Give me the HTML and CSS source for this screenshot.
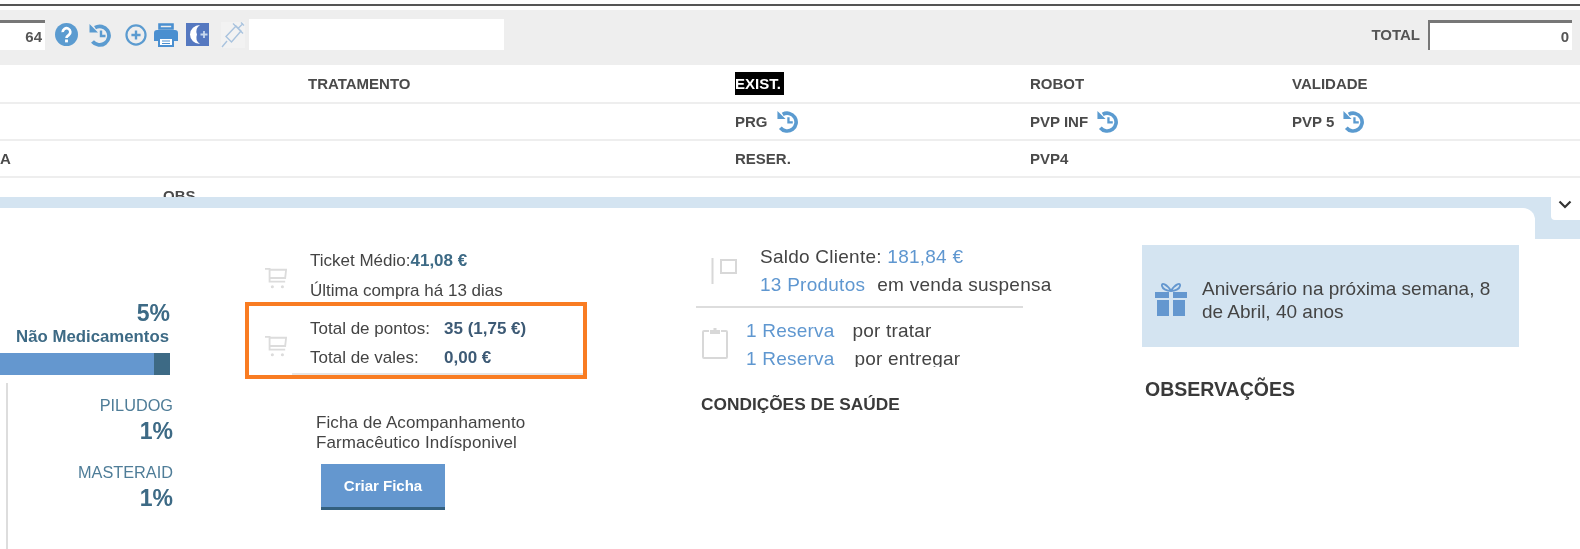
FILE: index.html
```html
<!DOCTYPE html>
<html lang="pt">
<head>
    <meta charset="UTF-8">
    <title>Ficha de Cliente</title>
    <link rel="stylesheet" href="styles.css">
</head>
<body>
    <svg class="icon-defs" width="0" height="0">
        <symbol id="i-history" viewBox="0 0 24 24">
            <path d="M7 4.600A9.300 9.300 0 1 1 4.500 18.500" fill="none" stroke="currentColor" stroke-width="3.800"/>
            <path d="M1.500 1v8.500H10z" fill="currentColor"/>
            <path d="M13 7.500v5.500h4.500" fill="none" stroke="currentColor" stroke-width="2.400"/>
        </symbol>
        <symbol id="i-cart" viewBox="0 0 24 24">
            <path d="M0 2h5v14h17M5 3h18l-1 9H5" fill="none" stroke="currentColor" stroke-width="2"/>
            <circle cx="8" cy="21.500" r="1.700" fill="currentColor"/>
            <circle cx="19" cy="21.500" r="1.700" fill="currentColor"/>
        </symbol>
    </svg>

    <div class="top-rule"></div>

    <!-- Toolbar -->
    <div class="toolbar">
        <div class="num-input qty">64</div>
        <svg class="tool tool-help" viewBox="0 0 24 24">
            <circle cx="12" cy="12" r="12" fill="#5b9bd0"/>
            <path d="M8 9.500a4 4 0 1 1 6.300 3.200c-1.400 1-2.300 1.500-2.300 3" fill="none" stroke="#fff" stroke-width="2.800"/>
            <rect x="10.500" y="17.200" width="3" height="3" fill="#fff"/>
        </svg>
        <svg class="tool tool-hist"><use href="#i-history"/></svg>
        <svg class="tool tool-plus" viewBox="0 0 24 24">
            <circle cx="12" cy="12" r="10.400" fill="none" stroke="#5b9bd0" stroke-width="2.400"/>
            <path d="M12 7v10M7 12h10" stroke="#5b9bd0" stroke-width="2.600"/>
        </svg>
        <svg class="tool tool-print" viewBox="0 0 24 24">
            <path d="M5.500 1.500h13v4h-13z" fill="none" stroke="#4a8fd0" stroke-width="2.600"/>
            <path d="M3 7h18a3 3 0 0 1 3 3v8h-4v-4H4v4H0v-8a3 3 0 0 1 3-3z" fill="#4a8fd0"/>
            <path d="M5 15h14v8H5z" fill="#fff" stroke="#4a8fd0" stroke-width="2"/>
            <path d="M8 18h8M8 20.500h8" stroke="#4a8fd0"/>
        </svg>
        <svg class="tool tool-door" viewBox="0 0 23 23">
            <rect width="23" height="23" fill="#5578c0"/>
            <path d="M14 2a10 9.500 0 1 0 0 19a8 8 0 0 1-3-9.500a8 8 0 0 1 3-9.500z" fill="#fff"/>
            <path d="M14.500 11.500h7M18 8v7" stroke="#c8d8ee" stroke-width="1.800"/>
        </svg>
        <svg class="tool tool-syringe" viewBox="0 0 24 26">
            <rect width="24" height="26" fill="#f2f2f2"/>
            <path d="M1 25l5-6M5 14.500l5.500 5.500L20 9l-5-5zM12 1.500l10 10M17 6.500l5-5M20 0.500l3 3" fill="none" stroke="#a9c3de" stroke-width="1.400"/>
        </svg>
        <div class="search-box"></div>
        <span class="total-label">TOTAL</span>
        <div class="num-input total">0</div>
    </div>

    <!-- Product fields -->
    <div class="field-row first">
        <span></span>
        <span>TRATAMENTO</span>
        <span><mark class="selected">EXIST.</mark></span>
        <span>ROBOT</span>
        <span>VALIDADE</span>
    </div>
    <div class="field-row">
        <span></span>
        <span></span>
        <span class="with-icon">PRG <svg class="hist-small"><use href="#i-history"/></svg></span>
        <span class="with-icon">PVP INF <svg class="hist-small"><use href="#i-history"/></svg></span>
        <span class="with-icon">PVP 5 <svg class="hist-small"><use href="#i-history"/></svg></span>
    </div>
    <div class="field-row">
        <span>A</span>
        <span></span>
        <span>RESER.</span>
        <span>PVP4</span>
        <span></span>
    </div>
    <div class="obs-row"><span>OBS</span></div>

    <div class="band"></div>

    <!-- Client panel -->
    <div class="panel-wrap">
        <div class="tab">
            <svg class="chevron" viewBox="0 0 14 9"><path d="M1.500 1.500L7 7l5.500-5.500" fill="none" stroke="#333" stroke-width="2.200"/></svg>
        </div>
        <div class="panel">
            <div class="col-brands">
                <div class="big-pct">5%</div>
                <div class="brand-main">Não Medicamentos</div>
                <div class="bar"><div class="bar-end"></div></div>
                <div class="brand-list">
                    <div class="brand-name">PILUDOG</div>
                    <div class="brand-pct">1%</div>
                    <div class="brand-name">MASTERAID</div>
                    <div class="brand-pct">1%</div>
                </div>
            </div>

            <div class="col-sales">
                <div class="stat stat-ticket">
                    <svg class="cart"><use href="#i-cart"/></svg>
                    <div>
                        <div>Ticket Médio:<b class="teal">41,08 €</b></div>
                        <div>Última compra há 13 dias</div>
                    </div>
                </div>
                <div class="stat stat-points">
                    <svg class="cart"><use href="#i-cart"/></svg>
                    <div class="points">
                        <span>Total de pontos:</span><b>35 (1,75 €)</b>
                        <span>Total de vales:</span><b>0,00 €</b>
                    </div>
                </div>
                <div class="ficha">
                    <p>Ficha de Acompanhamento<br>Farmacêutico Indísponivel</p>
                    <button class="btn">Criar Ficha</button>
                </div>
            </div>

            <div class="col-account">
                <div class="account-top">
                    <svg class="flag" viewBox="0 0 26 26">
                        <path d="M1.500 0v26M10 2h15v13H10z" fill="none" stroke="#d8d8d8" stroke-width="2"/>
                    </svg>
                    <div>
                        <div>Saldo Cliente: <span class="link">181,84 €</span></div>
                        <div><span class="link">13 Produtos</span><span class="after">em venda suspensa</span></div>
                    </div>
                </div>
                <div class="reservas">
                    <svg class="clip" viewBox="0 0 26 32">
                        <path d="M7 4H2a1 1 0 0 0-1 1v25a1 1 0 0 0 1 1h22a1 1 0 0 0 1-1V5a1 1 0 0 0-1-1h-5" fill="none" stroke="#d8d8d8" stroke-width="2"/>
                        <path d="M8 7V3h3.500V1h3v2H18v4z" fill="#d8d8d8"/>
                    </svg>
                    <div>
                        <div><span class="link">1 Reserva</span><span class="after-res">por tratar</span></div>
                        <div><span class="link">1 Reserva</span><span class="after-res far">por entregar</span></div>
                    </div>
                </div>
                <h3 class="section-title cond">CONDIÇÕES DE SAÚDE</h3>
            </div>

            <div class="col-notes">
                <div class="birthday">
                    <svg class="gift" viewBox="0 0 32 33">
                        <path d="M16 8C12 1 6-1 7 3c.5 3 5 5 9 5zm0 0c4-7 10-9 9-5-.5 3-5 5-9 5z" fill="none" stroke="#6497cf" stroke-width="1.800"/>
                        <path d="M0 9h14v6H0zM18 9h14v6H18zM2 17h12v16H2zM18 17h12v16H18z" fill="#6497cf"/>
                    </svg>
                    <p>Aniversário na próxima semana, 8 de Abril, 40 anos</p>
                </div>
                <h3 class="section-title obs-title">OBSERVAÇÕES</h3>
            </div>
        </div>

        <!-- annotation drawn over the screenshot -->
        <div class="highlight"></div>
    </div>
</body>
</html>
```

FILE: styles.css
```css
html {
    filter: blur(0.5px);
}
body {
    font-family: "Liberation Sans", Arial, sans-serif;
    margin: 0;
    padding: 0;
    height: 549px;
    overflow: hidden;
    background: white;
    color: #444;
    font-size: 16px;
}
.icon-defs {
    display: block;
    height: 0;
}
.top-rule {
    height: 2px;
    margin: 4px 0;
    background: #555;
}

/* toolbar */
.toolbar {
    display: flex;
    align-items: center;
    box-sizing: border-box;
    height: 55px;
    padding-bottom: 6px;
    background: #eee;
}
.num-input {
    background: white;
    border-top: 3px solid #777;
    box-sizing: border-box;
    height: 30px;
    line-height: 27px;
    text-align: right;
    font-weight: bold;
    font-size: 15px;
    color: #555;
    padding-right: 3px;
}
.qty {
    width: 45px;
}
.total {
    width: 144px;
    border-left: 2px solid #777;
    padding-right: 3px;
    margin-left: 8px;
    margin-right: 8px;
}
.tool {
    flex: none;
    color: #5b9bd0;
}
.tool-help {
    width: 23px;
    height: 23px;
    margin-left: 10px;
}
.tool-hist {
    width: 24px;
    height: 24px;
    margin-left: 10px;
}
.tool-plus {
    width: 22px;
    height: 22px;
    margin-left: 13px;
}
.tool-print {
    width: 24px;
    height: 24px;
    margin-left: 7px;
}
.tool-door {
    width: 23px;
    height: 23px;
    margin-left: 8px;
}
.tool-syringe {
    width: 24px;
    height: 26px;
    margin-left: 12px;
}
.search-box {
    width: 255px;
    height: 31px;
    background: white;
    margin-left: 4px;
}
.total-label {
    margin-left: auto;
    font-size: 15px;
    font-weight: bold;
    color: #555;
}

/* field rows */
.field-row {
    display: grid;
    grid-template-columns: 308px 427px 295px 262px 1fr;
    align-items: center;
    height: 35px;
    border-bottom: 2px solid #eee;
    font-size: 15px;
    font-weight: bold;
    color: #4a4a4a;
}
.field-row.first {
    height: 37px;
}
.selected {
    background: black;
    color: white;
    padding: 3px 3px 3px 0;
}
.with-icon {
    display: flex;
    align-items: center;
    gap: 8px;
}
.hist-small {
    width: 23px;
    height: 23px;
    color: #5b9bd0;
}
.obs-row {
    height: 19px;
    overflow: hidden;
    padding-left: 163px;
    font-size: 15px;
    font-weight: bold;
    color: #4a4a4a;
    line-height: 35px;
}
.band {
    height: 11px;
    background: #d4e4f1;
}

/* client panel */
.panel-wrap {
    position: relative;
    height: 341px;
    background: linear-gradient(#d4e4f1 31px, white 31px);
}
.tab {
    position: absolute;
    right: 0;
    top: -11px;
    width: 29px;
    height: 23px;
    background: white;
    border-bottom-left-radius: 4px;
}
.chevron {
    display: block;
    width: 14px;
    height: 9px;
    margin: 3px 0 0 7px;
}
.panel {
    display: grid;
    grid-template-columns: 265px 431px 446px 377px;
    width: 1535px;
    height: 341px;
    background: white;
    border-top-right-radius: 12px;
}
.highlight {
    position: absolute;
    left: 245px;
    top: 94px;
    width: 334px;
    height: 69px;
    border: 4px solid #f97c22;
}

/* brands */
.col-brands {
    width: 173px;
    padding-top: 93px;
    text-align: right;
    color: #3d6a85;
}
.big-pct {
    font-size: 23px;
    font-weight: bold;
    line-height: 24px;
    padding-right: 3px;
}
.brand-main {
    font-size: 16.800px;
    font-weight: bold;
    line-height: 20px;
    margin-top: 2px;
    padding-right: 4px;
    white-space: nowrap;
}
.bar {
    width: 170px;
    height: 22px;
    margin-top: 6px;
    background: #6497cf;
    display: flex;
    justify-content: flex-end;
}
.bar-end {
    width: 16px;
    background: #3d6a85;
}
.brand-list {
    margin: 8px 0 0 6px;
    border-left: 2px solid #ddd;
    height: 170px;
    padding-top: 10px;
}
.brand-name {
    font-size: 16.300px;
    line-height: 24px;
    color: #4f7d98;
}
.brand-pct {
    font-size: 23px;
    font-weight: bold;
    line-height: 28px;
    margin-bottom: 15px;
}

/* sales */
.col-sales {
    width: 318px;
    padding-top: 38px;
}
.stat {
    display: flex;
    align-items: flex-start;
    gap: 23px;
    font-size: 17px;
    white-space: nowrap;
}
.stat-ticket {
    height: 57px;
    line-height: 30px;
    border-bottom: 2px solid transparent;
    border-image: linear-gradient(to right, transparent 28px, #e5e5e5 28px) 1;
}
.stat-points {
    height: 59px;
    padding-top: 9px;
    line-height: 29px;
    border-bottom: 2px solid transparent;
    border-image: linear-gradient(to right, transparent 28px, #e5e5e5 28px) 1;
}
.cart {
    width: 22px;
    height: 22px;
    margin-top: 21px;
    color: #dcdcdc;
    flex: none;
}
.teal {
    color: #3d6a85;
}
.points {
    display: grid;
    grid-template-columns: 134px auto;
}
.points b {
    color: #3d5a75;
}
.ficha {
    margin: 38px 0 0 51px;
    font-size: 17px;
    letter-spacing: 0.1px;
    line-height: 20px;
    white-space: nowrap;
}
.ficha p {
    margin: 0;
}
.btn {
    display: block;
    width: 124px;
    height: 46px;
    margin: 11px 0 0 5px;
    background: #6497cf;
    color: white;
    border: none;
    border-bottom: 3px solid #33607f;
    font-family: inherit;
    font-size: 15px;
    font-weight: bold;
}

/* account */
.col-account {
    width: 327px;
    padding-top: 35px;
    font-size: 19px;
}
.account-top {
    display: flex;
    align-items: center;
    gap: 23px;
    padding: 0 0 7px 15px;
    line-height: 28px;
    letter-spacing: 0.25px;
    border-bottom: 2px solid #ddd;
    white-space: nowrap;
}
.flag {
    width: 26px;
    height: 26px;
    flex: none;
}
.link {
    color: #5f97d0;
}
.after {
    margin-left: 12px;
}
.after-res {
    margin-left: 18px;
}
.after-res.far {
    margin-left: 20px;
}
.reservas {
    display: flex;
    gap: 18px;
    height: 50px;
    margin: 9px 0 0 6px;
    overflow: hidden;
    line-height: 28px;
    letter-spacing: 0.2px;
    white-space: nowrap;
}
.clip {
    width: 26px;
    height: 32px;
    margin-top: 10px;
    flex: none;
}
.section-title {
    margin: 0;
    font-size: 18px;
    line-height: 24px;
    font-weight: bold;
    color: #3a3a3a;
    white-space: nowrap;
}
.section-title.cond {
    margin: 25px 0 0 5px;
    font-size: 17.300px;
}
.section-title.obs-title {
    margin: 30px 0 0 3px;
    font-size: 19.500px;
}

/* notes */
.col-notes {
    padding-top: 37px;
}
.birthday {
    display: flex;
    align-items: center;
    gap: 15px;
    height: 102px;
    padding: 0 22px 0 13px;
    background: #d4e4f1;
    font-size: 19px;
    line-height: 23px;
}
.gift {
    width: 32px;
    height: 33px;
    flex: none;
    margin-top: 6px;
}
.birthday p {
    margin: 8px 0 0;
}
```
